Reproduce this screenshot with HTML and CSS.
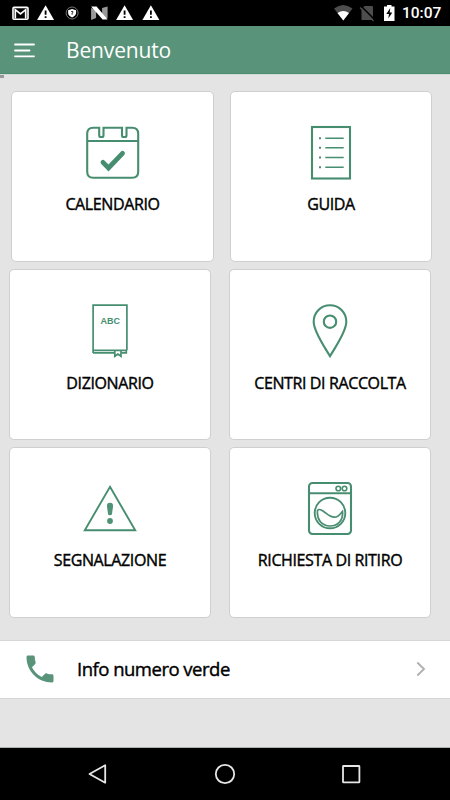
FILE: index.html
```
<!DOCTYPE html>
<html lang="it">
<head>
  <title>Benvenuto</title>
  <meta charset="utf-8">
  <meta name="viewport" content="width=device-width, initial-scale=1.0">
  <link rel="stylesheet" href="styles.css">
</head>
<body>
  <div class="status-bar">
    <div class="status-icons">
      <svg viewBox="0 0 26 26"><rect x="5.9" y="7.4" width="15" height="11.8" rx="1" fill="#000" stroke="#fff" stroke-width="1.6"/><path d="M8.2 18.5V9.7L13.4 14L18.6 9.7V18.5" fill="none" stroke="#fff" stroke-width="1.7"/></svg>
      <svg viewBox="0 0 26 26"><path d="M12.5 5.2L21 20H4Z" fill="#fff"/><path d="M12.5 10.5V14.8M12.5 16.2V18" stroke="#000" stroke-width="1.8"/></svg>
      <svg viewBox="0 0 26 26"><circle cx="13" cy="13" r="6" fill="none" stroke="#777" stroke-width="1"/><path d="M13 9L17 10.2V12.5C17 15 15.5 16.3 13 17.5C10.5 16.3 9 15 9 12.5V10.2Z" fill="#fff"/><path d="M12 11.8Q13 10.7 14 11.8Q14 12.7 13 13V14.8" fill="none" stroke="#000" stroke-width=".8"/></svg>
      <svg viewBox="0 0 26 26"><path d="M5 8L10 10V18L5 20ZM16 8L21.5 6.5V18.5L16 17Z" fill="#999"/><path d="M5 6.5H10.5L21.5 19.5H16.5Z" fill="#fff"/></svg>
      <svg viewBox="0 0 26 26"><path d="M12.5 5.2L21 20H4Z" fill="#fff"/><path d="M12.5 10.5V14.8M12.5 16.2V18" stroke="#000" stroke-width="1.8"/></svg>
      <svg viewBox="0 0 26 26"><path d="M12.8 5.2L21.3 20H4.3Z" fill="#fff"/><path d="M12.8 10.5V14.8M12.8 16.2V18" stroke="#000" stroke-width="1.8"/></svg>
    </div>
    <div class="status-right">
      <svg width="64" height="26" viewBox="0 0 64 26">
        <path d="M1 8.5Q10.3 1.500 19.5 8.5L10.3 20.5Z" fill="#4d4d4d"/>
        <path d="M4.500 13Q10.3 9 16 13L10.3 20.5Z" fill="#fff"/>
        <path d="M31.5 6H39Q40 6 40 7V20H28.5V9Z" fill="#4d4d4d"/>
        <path d="M28.500 6.500L42 20" stroke="#000" stroke-width="1.600"/>
        <path d="M27 7.500L40.5 21" stroke="#4d4d4d" stroke-width="1.200"/>
        <path d="M51 6.500H54V5H58.5V6.500H61.5V21H51Z" fill="#fff"/>
        <path d="M57.300 8L53.300 14H56L55.300 18.500L59.300 12.500H56.700Z" fill="#000"/>
      </svg>
      <span class="clock">10:07</span>
    </div>
  </div>

  <div class="toolbar">
    <svg width="22" height="18" viewBox="0 0 22 18"><path d="M1 3.500H20M1 9.500H15.500M1 15.300H20" stroke="#fff" stroke-width="1.800" stroke-linecap="round"/></svg>
    <h1>Benvenuto</h1>
  </div>

  <div class="content">
    <div class="scroll-mark"></div>
    <div class="cards first">
      <a class="card">
        <svg class="icon" viewBox="0 0 60 60">
          <path d="M20.500 4.700H39V12.500Q39 14 40.500 14H42Q43.500 14 43.500 12.500V4.700H49.200Q55.200 4.700 55.200 10.700V48.700Q55.200 54.700 49.200 54.700H10.200Q4.200 54.700 4.200 48.700V10.700Q4.200 4.700 10.200 4.700H16.200V12.500Q16.200 14 17.700 14H19Q20.500 14 20.500 12.500V4.700H22M4.200 18H55.200"/>
          <path d="M20 39.300L25.500 45L39.500 30.300" stroke-width="4.800" stroke-linecap="round"/>
        </svg>
        <span>CALENDARIO</span>
      </a>
      <a class="card">
        <svg class="icon" viewBox="0 0 60 60">
          <rect x="11" y="4" width="38" height="51.500"/>
          <path d="M24.300 15.200H42.700M24.300 24.800H42.700M24.300 34.500H42.700M24.300 44.300H42.700" stroke-width="1.400"/>
          <path d="M18 15.200H20M18 24.800H20M18 34.500H20M18 44.300H20"/>
        </svg>
        <span>GUIDA</span>
      </a>
    </div>
    <div class="cards second">
      <a class="card">
        <svg class="icon" viewBox="0 0 60 60">
          <path d="M13.100 52V4.200H46.900V49.300M13 49.300H47M13 51.900H34.500M41.500 51.900H46.300V49.500" stroke-width="1.700"/>
          <path d="M34.800 49.300V55.300L37.900 53L41 55.300V49.300" stroke-width="1.700"/>
          <text x="30.300" y="23">ABC</text>
        </svg>
        <span>DIZIONARIO</span>
      </a>
      <a class="card">
        <svg class="icon" viewBox="0 0 60 60">
          <path d="M30 55.200C25 46.500 13.700 31 13.700 20.800C13.700 11.500 21 4.300 30 4.300S46.300 11.500 46.300 20.800C46.300 31 35 46.500 30 55.200Z"/>
          <circle cx="30" cy="20.700" r="6.200"/>
        </svg>
        <span>CENTRI DI RACCOLTA</span>
      </a>
    </div>
    <div class="cards">
      <a class="card">
        <svg class="icon" viewBox="0 1 60 60">
          <path d="M30 8.800L55.200 52.200H4.800Z" stroke-width="1.900"/>
          <path class="fill" d="M30 24.700C32.500 24.700 33.200 26 33 28.500L32 36Q31.700 37.300 30 37.300T28 36L27 28.500C26.800 26 27.500 24.700 30 24.700Z"/>
          <circle class="fill" cx="30" cy="43" r="2.900"/>
        </svg>
        <span>SEGNALAZIONE</span>
      </a>
      <a class="card">
        <svg class="icon" viewBox="0 1 60 60">
          <rect x="9" y="5" width="42" height="51" rx="3.500"/>
          <path d="M9 15.200H51"/>
          <circle cx="38.300" cy="10.500" r="2.300" stroke-width="1.600"/>
          <circle cx="44.500" cy="10.500" r="2.300" stroke-width="1.600"/>
          <circle cx="30" cy="35" r="15.300" stroke-width="1.900"/>
          <path d="M17.500 32.500Q18.500 30.800 21.300 32C26 34.200 28.500 39.200 34.500 39.200C38.500 39.200 40 36.200 42.500 33.400C43.500 42.200 38 48 30 48C21.500 48 16.500 41.200 17.500 32.500Z" stroke-width="1.700"/>
        </svg>
        <span>RICHIESTA DI RITIRO</span>
      </a>
    </div>

    <a class="info-row">
      <svg width="36" height="36" viewBox="0 0 24 24"><path fill="#58937a" d="M6.620 10.790c1.440 2.830 3.760 5.140 6.590 6.590l2.200-2.200c.27-.27.67-.36 1.020-.24 1.120.37 2.330.57 3.570.57.55 0 1 .45 1 1V20c0 .55-.45 1-1 1-9.390 0-17-7.610-17-17 0-.55.45-1 1-1h3.500c.55 0 1 .45 1 1 0 1.250.2 2.450.57 3.570.11.350.03.740-.25 1.020l-2.200 2.200z"/></svg>
      <span>Info numero verde</span>
      <svg class="chevron" width="10" height="16" viewBox="0 0 10 16"><path d="M1.300 1.500L8 8L1.300 14.500" fill="none" stroke="#b0b0b0" stroke-width="1.900"/></svg>
    </a>
  </div>

  <div class="nav-bar">
    <svg viewBox="0 0 24 24"><path d="M19.200 3.300V20.700L3.500 12Z"/></svg>
    <svg viewBox="0 0 24 24"><circle cx="12" cy="12" r="9.200"/></svg>
    <svg viewBox="0 0 24 24"><rect x="4" y="4" width="16.400" height="16.400" rx=".5"/></svg>
  </div>
</body>
</html>
```

FILE: styles.css
```
* {
  box-sizing: border-box;
}

body {
  width: 450px;
  height: 800px;
  margin: 0;
  display: flex;
  flex-direction: column;
  overflow: hidden;
  background-color: #e4e4e4;
  font-family: "Open Sans", sans-serif;
}

svg {
  display: block;
  flex: none;
}

.status-bar {
  height: 26px;
  padding: 0 9px 0 7px;
  display: flex;
  justify-content: space-between;
  background-color: #000;
}

.status-icons {
  display: flex;
}

.status-icons svg {
  width: 26.2px;
  height: 26px;
}

.status-right {
  display: flex;
  gap: 5px;
}

.clock {
  width: 39px;
  color: #fff;
  font: 500 15.5px/27px Roboto, sans-serif;
  white-space: nowrap;
}

.toolbar {
  height: 48px;
  padding-left: 14px;
  display: flex;
  align-items: center;
  gap: 30px;
  background-color: #58937a;
  border-bottom: 1px solid #4b8d70;
}

.toolbar h1 {
  margin: 0;
  padding-top: 1px;
  color: #fff;
  font-size: 21px;
  font-weight: 400;
  letter-spacing: -0.15px;
}

.content {
  flex: 1;
  border-top: 1px solid #d4dad7;
  border-bottom: 1px solid #a9b3ae;
}

.scroll-mark {
  width: 4px;
  height: 3px;
  background-color: #999;
}

.cards {
  display: flex;
  gap: 18px;
  padding-left: 9px;
  margin-bottom: 7px;
}

.cards.first {
  gap: 16px;
  padding-left: 11px;
  margin-top: 13px;
}

.card {
  width: 202px;
  height: 171px;
  padding-top: 31px;
  display: flex;
  flex-direction: column;
  align-items: center;
  background-color: #fff;
  border: 1px solid #cfcfcf;
  border-radius: 5px;
}

.cards.first .card:first-child {
  width: 203px;
}

.icon {
  width: 60px;
  height: 60px;
  fill: none;
  stroke: #478e70;
  stroke-width: 2.1;
}

.icon .fill {
  fill: #4f9276;
  stroke: none;
}

.icon text {
  fill: #478e70;
  stroke: none;
  font: bold 9px "Liberation Sans", sans-serif;
  text-anchor: middle;
}

.card span,
.info-row span {
  color: #000;
  -webkit-text-stroke: 0.4px #000;
  white-space: nowrap;
}

.card span {
  margin-top: 10px;
  font-size: 16px;
  line-height: 22px;
  letter-spacing: -0.38px;
}

.cards.second span {
  margin-top: 11px;
}

.info-row {
  height: 59px;
  margin-top: 22px;
  padding: 0 24px 2px 22px;
  display: flex;
  align-items: center;
  background-color: #fff;
  border-top: 1px solid #d6d6d6;
  border-bottom: 1px solid #d6d6d6;
}

.info-row span {
  margin-left: 19px;
  font-size: 18.5px;
  letter-spacing: -0.5px;
}

.info-row .chevron {
  margin-left: auto;
}

.nav-bar {
  height: 52px;
  padding: 0 87px 0 86px;
  display: flex;
  justify-content: space-between;
  align-items: center;
  background-color: #000;
}

.nav-bar svg {
  width: 24px;
  height: 24px;
  fill: none;
  stroke: #e6e6e6;
  stroke-width: 1.8;
  stroke-linejoin: round;
}
```
